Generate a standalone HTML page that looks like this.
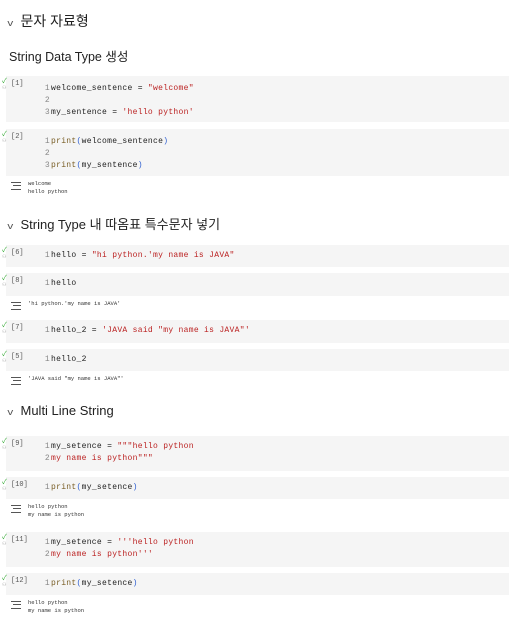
<!DOCTYPE html>
<html><head><meta charset="utf-8"><style>
body{margin:0;width:509px;height:629px;background:#fff;position:relative;overflow:hidden;font-family:"Liberation Sans","Noto Sans CJK KR",sans-serif;color:#222}
.h{position:absolute;left:8px;font-size:14px;color:#222}
.h .c{display:inline-block;font-size:9px;color:#555;margin-right:8px;transform:scaleX(1.3)}
.sub{position:absolute;left:9px;font-size:12.5px;color:#222}
.cell{position:absolute;left:6px;width:503px;background:#f5f5f5}
.ex{position:absolute;left:-4px;top:2px;font-size:7px;color:#3a3;line-height:7px}
.ex i{display:block;font-style:normal;color:#999;font-size:5px}
.n{position:absolute;left:5px;top:4px;font-family:"Liberation Mono",monospace;font-size:7px;color:#555}
.code{position:absolute;left:37px;top:7px;font-family:"Liberation Mono",monospace;font-size:8px;line-height:12px;letter-spacing:0.3px;color:#222;white-space:pre}
.code b{font-weight:normal;color:#888;display:inline-block;width:7px;text-align:right;margin-right:1px}
.s{color:#b22}.f{color:#795e26}.p{color:#3060d0}
.out{position:absolute;left:28px;font-family:"Liberation Mono",monospace;font-size:5.5px;line-height:8px;color:#333;white-space:pre}
.oi{position:absolute;left:11px;width:10px;height:6px;border-top:1px solid #555;border-bottom:1px solid #555}
.oi:after{content:"";position:absolute;left:2px;top:2px;width:8px;height:1px;background:#555}
</style></head><body>
<div class="h" style="top:11px"><span class="c">v</span>문자 자료형</div>
<div class="sub" style="top:46px">String Data Type 생성</div>

<div class="cell" style="top:76px;height:46px"><div class="ex">✓<i>⚇</i></div><div class="n">[1]</div><div class="code"><b>1</b>welcome_sentence = <span class="s">"welcome"</span>
<b>2</b>
<b>3</b>my_sentence = <span class="s">'hello python'</span></div></div>
<div class="cell" style="top:129px;height:47px"><div class="ex">✓<i>⚇</i></div><div class="n">[2]</div><div class="code"><b>1</b><span class="f">print</span><span class="p">(</span>welcome_sentence<span class="p">)</span>
<b>2</b>
<b>3</b><span class="f">print</span><span class="p">(</span>my_sentence<span class="p">)</span></div></div>
<div class="oi" style="top:182px"></div><div class="out" style="top:180px">welcome
hello python</div>

<div class="h" style="top:214px;font-size:13px"><span class="c">v</span>String Type 내 따옴표 특수문자 넣기</div>

<div class="cell" style="top:245px;height:22px"><div class="ex">✓<i>⚇</i></div><div class="n">[6]</div><div class="code" style="top:5px"><b>1</b>hello = <span class="s">"hi python.'my name is JAVA"</span></div></div>
<div class="cell" style="top:273px;height:23px"><div class="ex">✓<i>⚇</i></div><div class="n">[8]</div><div class="code" style="top:5px"><b>1</b>hello</div></div>
<div class="oi" style="top:302px"></div><div class="out" style="top:300px">'hi python.'my name is JAVA'</div>
<div class="cell" style="top:320px;height:23px"><div class="ex">✓<i>⚇</i></div><div class="n">[7]</div><div class="code" style="top:5px"><b>1</b>hello_2 = <span class="s">'JAVA said "my name is JAVA"'</span></div></div>
<div class="cell" style="top:349px;height:22px"><div class="ex">✓<i>⚇</i></div><div class="n">[5]</div><div class="code" style="top:5px"><b>1</b>hello_2</div></div>
<div class="oi" style="top:377px"></div><div class="out" style="top:375px">'JAVA said "my name is JAVA"'</div>

<div class="h" style="top:403px;font-size:13px"><span class="c">v</span>Multi Line String</div>

<div class="cell" style="top:436px;height:35px"><div class="ex">✓<i>⚇</i></div><div class="n">[9]</div><div class="code" style="top:5px"><b>1</b>my_setence = <span class="s">"""hello python</span>
<b>2</b><span class="s">my name is python"""</span></div></div>
<div class="cell" style="top:477px;height:22px"><div class="ex">✓<i>⚇</i></div><div class="n">[10]</div><div class="code" style="top:5px"><b>1</b><span class="f">print</span><span class="p">(</span>my_setence<span class="p">)</span></div></div>
<div class="oi" style="top:505px"></div><div class="out" style="top:503px">hello python
my name is python</div>
<div class="cell" style="top:532px;height:35px"><div class="ex">✓<i>⚇</i></div><div class="n">[11]</div><div class="code" style="top:5px"><b>1</b>my_setence = <span class="s">'''hello python</span>
<b>2</b><span class="s">my name is python'''</span></div></div>
<div class="cell" style="top:573px;height:22px"><div class="ex">✓<i>⚇</i></div><div class="n">[12]</div><div class="code" style="top:5px"><b>1</b><span class="f">print</span><span class="p">(</span>my_setence<span class="p">)</span></div></div>
<div class="oi" style="top:601px"></div><div class="out" style="top:599px">hello python
my name is python</div>
</body></html>
